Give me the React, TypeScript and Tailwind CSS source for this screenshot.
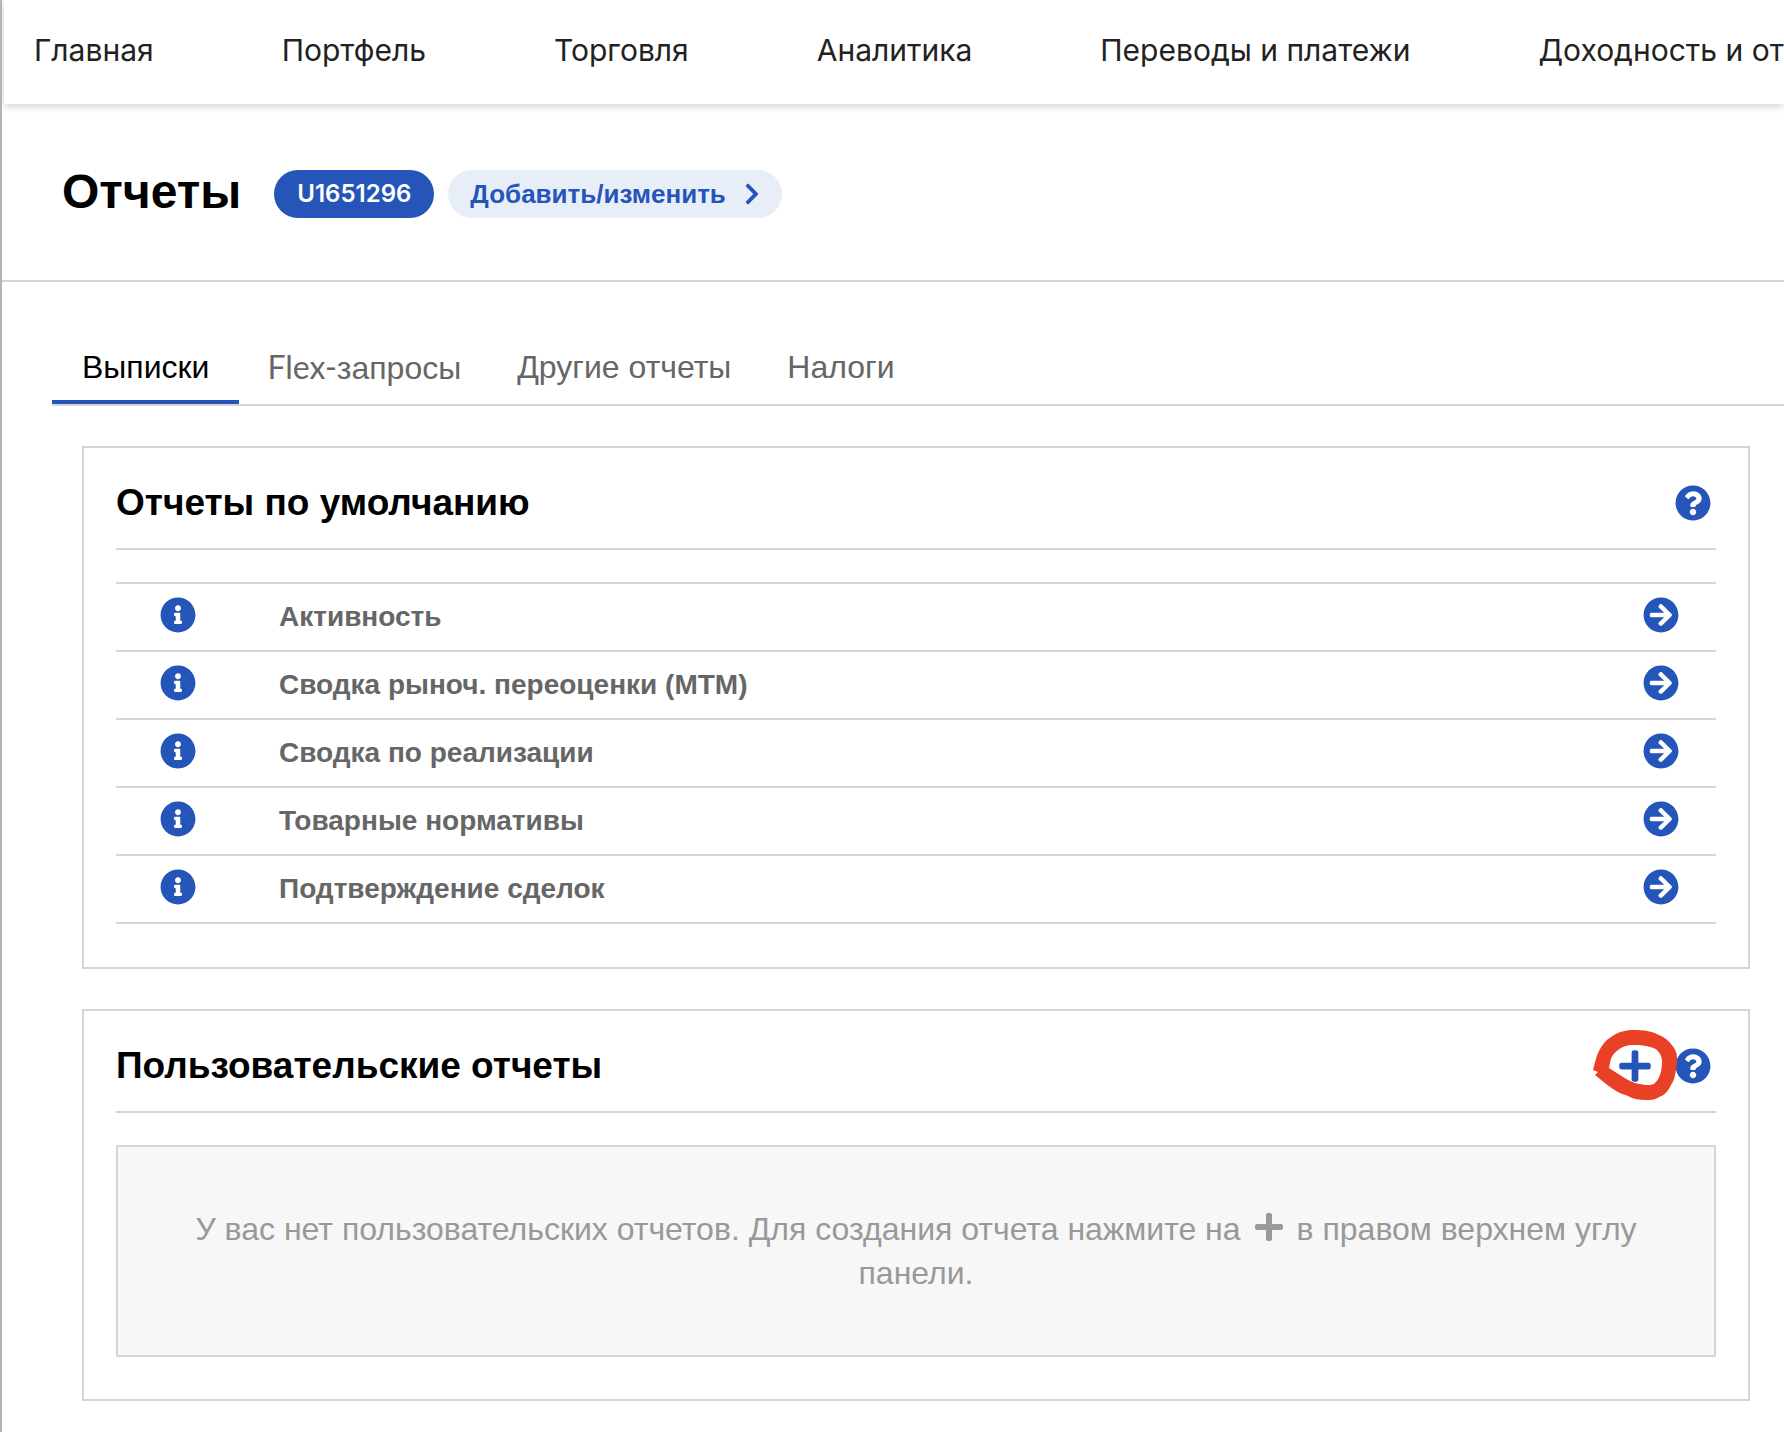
import { FaArrowCircleRight, FaChevronRight, FaInfoCircle, FaPlus, FaQuestionCircle } from "react-icons/fa";

const navItems = ["Главная", "Портфель", "Торговля", "Аналитика", "Переводы и платежи", "Доходность и отчеты"];

const tabs = [
  { latin: "", label: "Выписки" },
  { latin: "Flex-", label: "запросы" },
  { latin: "", label: "Другие отчеты" },
  { latin: "", label: "Налоги" },
];

const reports = [
  "Активность",
  "Сводка рыноч. переоценки (MTM)",
  "Сводка по реализации",
  "Товарные нормативы",
  "Подтверждение сделок",
];

function Marker() {
  return (
    <svg
      className="absolute top-1/2 left-1/2 h-[72px] w-[86px] -translate-x-1/2 -translate-y-1/2 pointer-events-none"
      viewBox="0 1 86 72"
      fill="#ea4025"
      overflow="visible"
      aria-hidden="true"
    >
      <path
        fillRule="evenodd"
        d="M1 41 C3 34 4 27 7.5 21 C10 16 14 11 19 8 C26 3 33 1 41 1 C51 1 60 2 67 6 C72 8 76 11 79 15 C83 19 85 24 85 29 C85 33 85 37 84 41 C83 47 82 52 79 56 C76 62 73 66 67 68 C63 71 59 71 54 71 C48 71 41 70 36 67 C30 65 25 63 21 60 C14 55 9 51 3 46 L6 43 Z M17 39 L31 48 C36 51 41 54 47 55 C53 56 60 57 63 54 C69 48 70 40 70 31 C69 24 65 20 60 18.5 C54 16.5 48 16 42 16 C37 16 34 16.5 30 18.5 C25 21 22 24 20 27.5 C18 31 18 35 17 39 Z"
      />
    </svg>
  );
}

export default function App() {
  return (
    <div className="min-h-screen overflow-hidden border-l-2 border-[#b4b2c0] bg-white font-['Liberation_Sans',Arial,sans-serif] text-black">
      <header className="ml-[2px] h-[104px] bg-white shadow-[0_2px_8px_rgba(0,0,0,0.2)]">
        <nav className="flex gap-32 px-[30px] pt-7 font-['Inter',sans-serif] text-[30px] leading-[44px] whitespace-nowrap text-[#222222]">
          {navItems.map((item) => (
            <a key={item} href="#">
              {item}
            </a>
          ))}
        </nav>
      </header>

      <div className="flex h-[178px] items-center border-b-2 border-[#d6d6d6] px-[60px]">
        <h1 className="text-[48px] leading-[56px] font-bold">Отчеты</h1>
        <div className="ml-[33px] flex gap-3.5 pt-1">
          <button className="h-12 rounded-full bg-[#2555b8] px-[23px] font-['Inter',sans-serif] text-[24px] font-semibold text-white">
            U1651296
          </button>
          <button className="flex h-12 items-center gap-3.5 rounded-full bg-[#e8eef8] px-[18px] pl-[22px] text-[26px] font-bold text-[#2555b8]">
            Добавить/изменить
            <FaChevronRight className="size-6" />
          </button>
        </div>
      </div>

      <div className="ml-[50px] flex border-b-2 border-[#d6d6d6] pt-[50px]" role="tablist">
        {tabs.map((tab, i) => (
          <button
            key={tab.label}
            role="tab"
            aria-selected={i === 0}
            className={
              i === 0
                ? "h-[72px] border-b-4 border-[#2555b8] px-[30px] pt-0.5 text-[32px] leading-9"
                : "h-[72px] border-b-4 border-transparent px-7 pt-0.5 text-[32px] leading-9 text-[#666666]"
            }
          >
            {tab.latin && <span className="font-['Lato',sans-serif]">{tab.latin}</span>}
            {tab.label}
          </button>
        ))}
      </div>

      <main className="flex flex-col gap-10 pt-10 pr-[34px] pl-20">
        <section className="border-2 border-[#d6d6d6] px-8 pb-[43px]">
          <div className="flex h-[102px] items-center justify-between border-b-2 border-[#d6d6d6] pt-[10px] pr-[5px]">
            <h2 className="text-[37px] font-bold">Отчеты по умолчанию</h2>
            <button aria-label="Справка" className="text-[#2555b8]">
              <FaQuestionCircle className="size-9" />
            </button>
          </div>
          <table className="mt-8 w-full border-t-2 border-[#d6d6d6]">
            <tbody>
              {reports.map((name) => (
                <tr key={name} className="h-[68px] border-b-2 border-[#d6d6d6]">
                  <td className="w-[163px] pb-1 pl-11">
                    <button aria-label="Информация" className="block text-[#2555b8]">
                      <FaInfoCircle className="size-9" />
                    </button>
                  </td>
                  <td className="text-[28px] font-bold text-[#666666]">{name}</td>
                  <td className="pr-[37px] pb-1">
                    <button aria-label="Открыть" className="ml-auto block text-[#2555b8]">
                      <FaArrowCircleRight className="size-9" />
                    </button>
                  </td>
                </tr>
              ))}
            </tbody>
          </table>
        </section>

        <section className="border-2 border-[#d6d6d6] px-8 pb-[42px]">
          <div className="flex h-[102px] items-center justify-between border-b-2 border-[#d6d6d6] pt-[10px] pr-[5px]">
            <h2 className="text-[37px] font-bold">Пользовательские отчеты</h2>
            <div className="flex items-center gap-[22px] text-[#2555b8]">
              <button aria-label="Создать отчет" className="relative">
                <Marker />
                <FaPlus className="relative size-9" />
              </button>
              <button aria-label="Справка">
                <FaQuestionCircle className="size-9" />
              </button>
            </div>
          </div>
          <div className="mt-8 border-2 border-[#d6d6d6] bg-[#f7f7f7] px-16 py-[60px] text-center text-[32px] leading-[44px] text-[#999999]">
            У вас нет пользовательских отчетов. Для создания отчета нажмите на
            <FaPlus className="mx-3 inline size-8 align-[-3px]" />в правом верхнем углу панели.
          </div>
        </section>
      </main>
    </div>
  );
}
